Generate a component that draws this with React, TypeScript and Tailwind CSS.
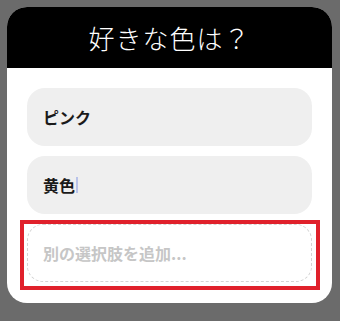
import React from "react";

export default function App() {
  return (
    <div
      className="w-[340px] h-[321px] bg-[#6b6b6b] pt-[7px] pl-[7px]"
      style={{ fontFamily: '"Noto Sans CJK JP", "Noto Sans", sans-serif' }}
    >
      <div className="relative w-[325px] h-[296px] bg-white rounded-[20px] overflow-hidden flex flex-col">
        <div className="h-[61px] bg-black flex items-center justify-center">
          <span className="text-white text-[26px] font-light leading-none tracking-[1px]">好きな色は？</span>
        </div>
        <div className="flex flex-col gap-[10px] px-[20px] pt-[20px]">
          <div className="h-[58px] rounded-[18px] bg-[#efefef] flex items-center px-[16px]">
            <span className="text-[16px] font-bold text-[#1a1a1a]">ピンク</span>
          </div>
          <div className="h-[58px] rounded-[18px] bg-[#efefef] flex items-center px-[16px]">
            <span className="text-[16px] font-bold text-[#1a1a1a]">黄色</span>
            <span className="ml-[1px] w-[2px] h-[16px] bg-[#b9c3ea]" />
          </div>
          <div className="h-[58px] rounded-[16px] border border-dashed border-[#d4d4d4] flex items-center px-[15px]">
            <span className="text-[16px] font-bold text-[#c6c6c6]">別の選択肢を追加...</span>
          </div>
        </div>
        <div className="absolute left-[13px] top-[213px] w-[300px] h-[70px] border-[4px] border-[#e0212b]" />
      </div>
    </div>
  );
}
